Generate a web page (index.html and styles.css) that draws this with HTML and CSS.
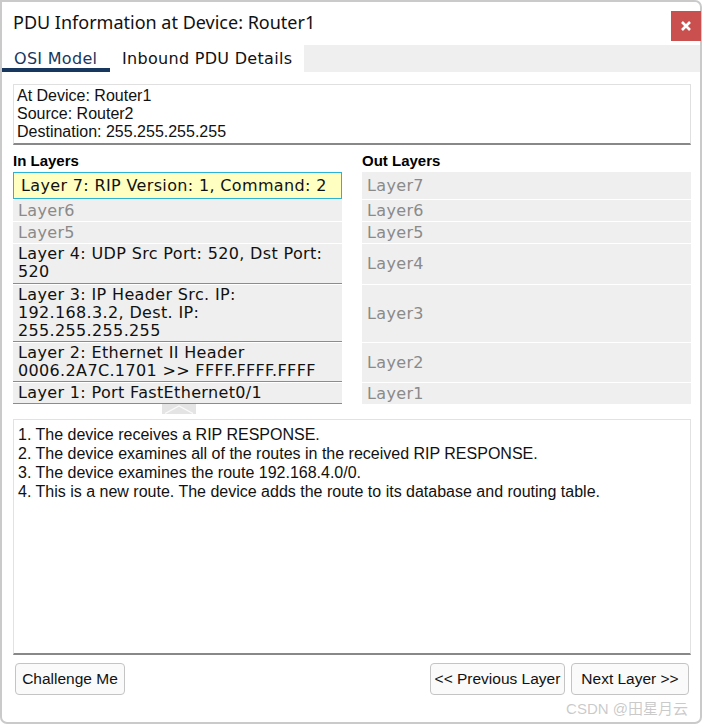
FILE: index.html
```html
<!DOCTYPE html>
<html>
<head>
<meta charset="utf-8">
<link rel="stylesheet" href="styles.css">
</head>
<body>
<div class="dialog">
  <div class="header">
    <div class="title">PDU Information at Device: Router1</div>
    <button class="close" aria-label="close">
      <svg width="12" height="10" viewBox="0 0 12 10"><path d="M2 1 L10 9 M10 1 L2 9" stroke="#fff" stroke-width="2.6" fill="none"/></svg>
    </button>
  </div>
  <div class="tabs">
    <div class="tab active">OSI Model</div>
    <div class="tab">Inbound PDU Details</div>
    <div class="tab-fill"></div>
  </div>
  <div class="content">
    <div class="info">
      <div>At Device: Router1</div>
      <div>Source: Router2</div>
      <div>Destination: 255.255.255.255</div>
    </div>
    <div class="layers">
      <div class="head">In Layers</div>
      <div class="head">Out Layers</div>

      <div class="in sel">Layer 7: RIP Version: 1, Command: 2</div>
      <div class="out">Layer7</div>

      <div class="in dim">Layer6</div>
      <div class="out">Layer6</div>

      <div class="in dim">Layer5</div>
      <div class="out">Layer5</div>

      <div class="in on tall">Layer 4: UDP Src Port: 520, Dst Port: 520</div>
      <div class="out">Layer4</div>

      <div class="in on">Layer 3: IP Header Src. IP: 192.168.3.2, Dest. IP: 255.255.255.255</div>
      <div class="out">Layer3</div>

      <div class="in on">Layer 2: Ethernet II Header 0006.2A7C.1701 &gt;&gt; FFFF.FFFF.FFFF</div>
      <div class="out">Layer2</div>

      <div class="in on">Layer 1: Port FastEthernet0/1</div>
      <div class="out">Layer1</div>
    </div>
    <div class="chev-row">
      <div class="chev">
        <svg width="34" height="10" viewBox="0 0 34 10"><path d="M3 9.5 L17 2 L31 9.5" stroke="#fafafa" stroke-width="1.3" fill="none"/></svg>
      </div>
    </div>
    <div class="desc">
      <div>1. The device receives a RIP RESPONSE.</div>
      <div>2. The device examines all of the routes in the received RIP RESPONSE.</div>
      <div>3. The device examines the route 192.168.4.0/0.</div>
      <div>4. This is a new route. The device adds the route to its database and routing table.</div>
    </div>
    <div class="buttons">
      <button class="btn challenge">Challenge Me</button>
      <div class="spacer"></div>
      <button class="btn prev">&lt;&lt; Previous Layer</button>
      <button class="btn next">Next Layer &gt;&gt;</button>
    </div>
  </div>
  <div class="watermark">CSDN @田星月云</div>
</div>
</body>
</html>
```

FILE: styles.css
```css
html, body {
  margin: 0;
  padding: 0;
  background: #ffffff;
}
body {
  width: 704px;
  height: 726px;
  overflow: hidden;
  font-family: "Liberation Sans", Arial, sans-serif;
}
.dialog {
  position: relative;
  width: 702px;
  height: 724px;
  box-sizing: border-box;
  border: 2px solid #cacaca;
  border-radius: 0 7px 7px 7px;
  background: #fff;
  display: flex;
  flex-direction: column;
}
.header {
  height: 43px;
  display: flex;
  align-items: flex-start;
  justify-content: space-between;
}
.title {
  font-family: "Noto Sans", "DejaVu Sans", sans-serif;
  font-size: 18px;
  color: #111;
  padding: 7px 0 0 11px;
  line-height: 26px;
}
.close {
  width: 30px;
  height: 30px;
  margin: 9px -1px 0 0;
  border: none;
  background: #c9504f;
  padding: 0;
  display: flex;
  align-items: center;
  justify-content: center;
}
.tabs {
  display: flex;
  height: 27px;
}
.tab {
  font-family: "DejaVu Sans", Verdana, sans-serif;
  font-size: 16px;
  letter-spacing: 0.3px;
  color: #111;
  padding: 4px 12px 0 12px;
  line-height: 20px;
  box-sizing: border-box;
  height: 27px;
  background: #fff;
}
.tab.active {
  border-bottom: 4px solid #17375e;
  width: 108px;
  color: #17375e;
}
.tab-fill {
  flex: 1;
  background: #efefef;
}
.content {
  padding: 12px 9px 0 11px;
  display: flex;
  flex-direction: column;
}
.info {
  border: 1px solid #e0e0e0;
  border-bottom: 2px solid #888;
  padding: 2px 3px 3px 3px;
  font-size: 16px;
  line-height: 18px;
  color: #111;
  height: 61px;
  box-sizing: border-box;
}
.layers {
  display: grid;
  grid-template-columns: 329px 329px;
  column-gap: 20px;
  row-gap: 1px;
  margin-top: 7px;
}
.head {
  font-weight: bold;
  font-size: 15px;
  line-height: 18px;
  color: #000;
  margin-bottom: 1px;
}
.in, .out {
  font-family: "DejaVu Sans", Verdana, sans-serif;
  font-size: 16px;
  letter-spacing: 0.35px;
  line-height: 18px;
  background: #efefef;
  color: #111;
}
.in {
  padding: 1px 5px;
}
.in.on {
  border-bottom: 1px solid #8c8c8c;
}
.in.tall {
  padding-bottom: 2px;
}
.in.dim {
  color: #8a8a8a;
  padding: 2px 5px 1px;
}
.in.sel {
  background: #ffffc2;
  border: 1px solid #28b4d4;
  padding: 4px 7px 3px;
}
.out {
  color: #8a8a8a;
  padding: 0 5px;
  display: flex;
  align-items: center;
}
.chev-row {
  height: 10px;
  padding-left: 149px;
  margin-bottom: 5px;
}
.chev {
  width: 34px;
  height: 10px;
  background: #e4e4e4;
}
.chev svg {
  display: block;
}
.desc {
  border: 1px solid #e2e2e2;
  border-bottom: 2px solid #888;
  height: 236px;
  box-sizing: border-box;
  padding: 5px 4px;
  font-size: 16px;
  line-height: 19px;
  color: #111;
}
.buttons {
  display: flex;
  gap: 6px;
  margin-top: 8px;
  padding: 0 2px 0 2px;
}
.spacer {
  flex: 1;
}
.btn {
  font-family: "Liberation Sans", Arial, sans-serif;
  font-size: 15.5px;
  color: #111;
  background: #fafafa;
  border: 1px solid #c4c4c4;
  border-radius: 4px;
  height: 32px;
  padding: 0;
}
.btn.challenge { width: 110px; }
.btn.prev { width: 135px; }
.btn.next { width: 118px; }
.watermark {
  position: absolute;
  right: 12px;
  bottom: 4px;
  font-size: 15px;
  color: rgba(150,150,150,0.5);
  font-family: "Liberation Sans", "Noto Sans CJK SC", sans-serif;
}
```
